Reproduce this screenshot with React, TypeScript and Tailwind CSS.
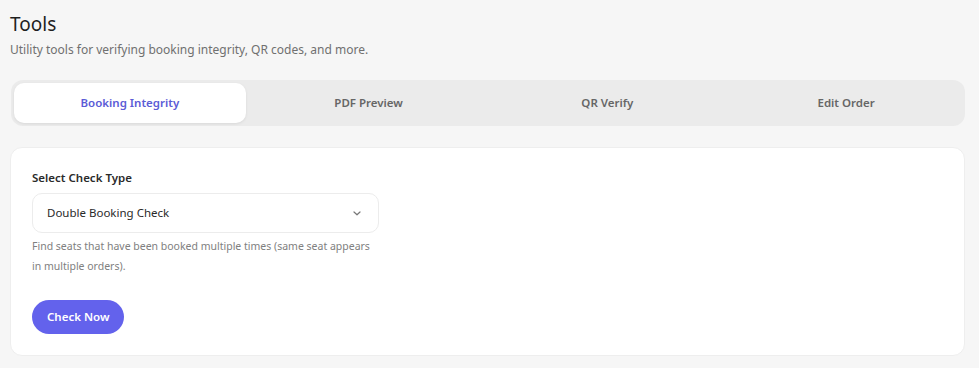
import { useState } from 'react';

const TABS = ['Booking Integrity', 'PDF Preview', 'QR Verify', 'Edit Order'];

export default function App() {
  const [tab, setTab] = useState('Booking Integrity');

  return (
    <div className="min-h-[368px] bg-[#f6f6f6] px-[10px] pt-[11px] text-[#222]" style={{ fontFamily: '"Noto Sans", "Open Sans", sans-serif' }}>
      <h1 className="text-[19px] leading-[26px] text-[#1f1f1f]">Tools</h1>
      <p className="mt-[4px] text-[12px] leading-[18px] text-[#707070]">Utility tools for verifying booking integrity, QR codes, and more.</p>

      {/* Tabs */}
      <div className="mt-[21px] mr-[4px] ml-[1px] flex gap-[7px] rounded-[12px] bg-[#ebebeb] p-[3px]">
        {TABS.map((t) => (
          <button key={t} onClick={() => setTab(t)}
            className={t === tab
              ? 'h-[40px] flex-1 rounded-[10px] bg-white text-[11.5px] font-semibold text-[#5b5bd6] shadow-[0_1px_3px_rgba(0,0,0,0.08)]'
              : 'h-[40px] flex-1 rounded-[10px] text-[11.5px] font-semibold text-[#666]'}>
            {t}
          </button>
        ))}
      </div>

      {/* Card */}
      <div className="mt-[21px] mr-[4px] rounded-[12px] border border-[#eeeeee] bg-white px-[21px] pt-[22px] pb-[21px]">
        <label className="block text-[11.5px] font-semibold leading-[16px] text-[#2a2a2a]">Select Check Type</label>
        <div className="mt-[7px] flex h-[40px] w-[347px] items-center justify-between rounded-[10px] border border-[#ececec] bg-white pl-[14px] pr-[17px]">
          <span className="text-[11.5px] text-[#2a2a2a]">Double Booking Check</span>
          <svg width="8" height="5" viewBox="0 0 8 5" fill="none">
            <path d="M1 1l3 2.8L7 1" stroke="#777" strokeWidth="1.2" strokeLinecap="round" strokeLinejoin="round" />
          </svg>
        </div>
        <p className="mt-[3px] w-[345px] text-[10.5px] leading-[20px] text-[#808080]">
          Find seats that have been booked multiple times (same seat appears in multiple orders).
        </p>
        <button className="mt-[24px] h-[34px] rounded-full bg-[#6362ec] px-[15px] text-[11.5px] font-semibold text-white">Check Now</button>
      </div>
    </div>
  );
}
